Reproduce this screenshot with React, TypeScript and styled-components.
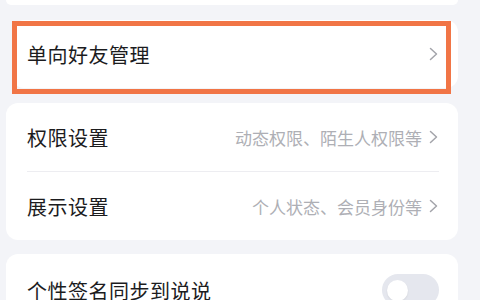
import React, { useState } from "react";
import styled, { createGlobalStyle } from "styled-components";

const GlobalStyle = createGlobalStyle`
  html, body {
    margin: 0;
    padding: 0;
    background: #f3f4f8;
  }
  body {
    font-family: "Noto Sans CJK SC", "Noto Sans", sans-serif;
    overflow: hidden;
  }
`;

const Page = styled.div`
  width: 480px;
  height: 300px;
  overflow: hidden;
  display: flex;
  flex-direction: column;
  padding: 0 22px 0 6px;
  box-sizing: border-box;
`;

const Card = styled.div<{ $top: number; $inset?: number }>`
  position: relative;
  background: #ffffff;
  border-radius: 12px;
  margin-top: ${(p) => p.$top}px;
  margin-left: ${(p) => p.$inset ?? 0}px;
  flex-shrink: 0;
`;

const Stub = styled.div`
  height: 5px;
  background: #ffffff;
  border-radius: 0 0 12px 12px;
  flex-shrink: 0;
`;

const Row = styled.div<{ $height: number; $pad?: number }>`
  height: ${(p) => p.$height}px;
  display: flex;
  align-items: center;
  justify-content: space-between;
  padding: 0 20px 0 ${(p) => p.$pad ?? 21}px;
  box-sizing: border-box;
`;

const Divider = styled.div`
  height: 1px;
  background: #ededf1;
  margin: 0 19px 0 21px;
`;

const Title = styled.span`
  font-size: 20px;
  color: #1c1c1e;
  letter-spacing: 0.5px;
`;

const Side = styled.div`
  display: flex;
  align-items: center;
  gap: 7px;
`;

const Hint = styled.span`
  font-size: 17px;
  color: #aeafb5;
`;

const Highlight = styled.div`
  position: absolute;
  left: 0;
  top: 1px;
  right: 7px;
  bottom: -6px;
  border: 5px solid #f17546;
  pointer-events: none;
`;

const Track = styled.button<{ $on: boolean }>`
  width: 57px;
  height: 32px;
  border: none;
  border-radius: 16px;
  padding: 0 5px;
  background: ${(p) => (p.$on ? "#2f8cff" : "#e5e7ee")};
  display: flex;
  align-items: center;
  justify-content: ${(p) => (p.$on ? "flex-end" : "flex-start")};
  cursor: pointer;
  margin-right: -1px;
`;

const Knob = styled.span`
  width: 21px;
  height: 21px;
  border-radius: 50%;
  background: #ffffff;
  box-shadow: 0 1px 2px rgba(0, 0, 0, 0.08);
`;

const Chevron = () => (
  <svg width="9" height="14" viewBox="0 0 9 14" fill="none">
    <polyline
      points="1.5,1.5 7.5,7 1.5,12.5"
      stroke="#a3a4aa"
      strokeWidth="1.5"
      strokeLinecap="round"
      strokeLinejoin="round"
    />
  </svg>
);

const App = () => {
  const [syncSign, setSyncSign] = useState<boolean>(false);

  return (
    <>
      <GlobalStyle />
      <Page>
        <Stub />
        <Card $top={15} $inset={6}>
          <Row $height={68} $pad={15}>
            <Title>单向好友管理</Title>
            <Chevron />
          </Row>
          <Highlight />
        </Card>
        <Card $top={15}>
          <Row $height={68}>
            <Title>权限设置</Title>
            <Side>
              <Hint>动态权限、陌生人权限等</Hint>
              <Chevron />
            </Side>
          </Row>
          <Divider />
          <Row $height={68}>
            <Title>展示设置</Title>
            <Side>
              <Hint>个人状态、会员身份等</Hint>
              <Chevron />
            </Side>
          </Row>
        </Card>
        <Card $top={14}>
          <Row $height={72}>
            <Title>个性签名同步到说说</Title>
            <Track $on={syncSign} onClick={() => setSyncSign((v) => !v)}>
              <Knob />
            </Track>
          </Row>
        </Card>
      </Page>
    </>
  );
};

export default App;
